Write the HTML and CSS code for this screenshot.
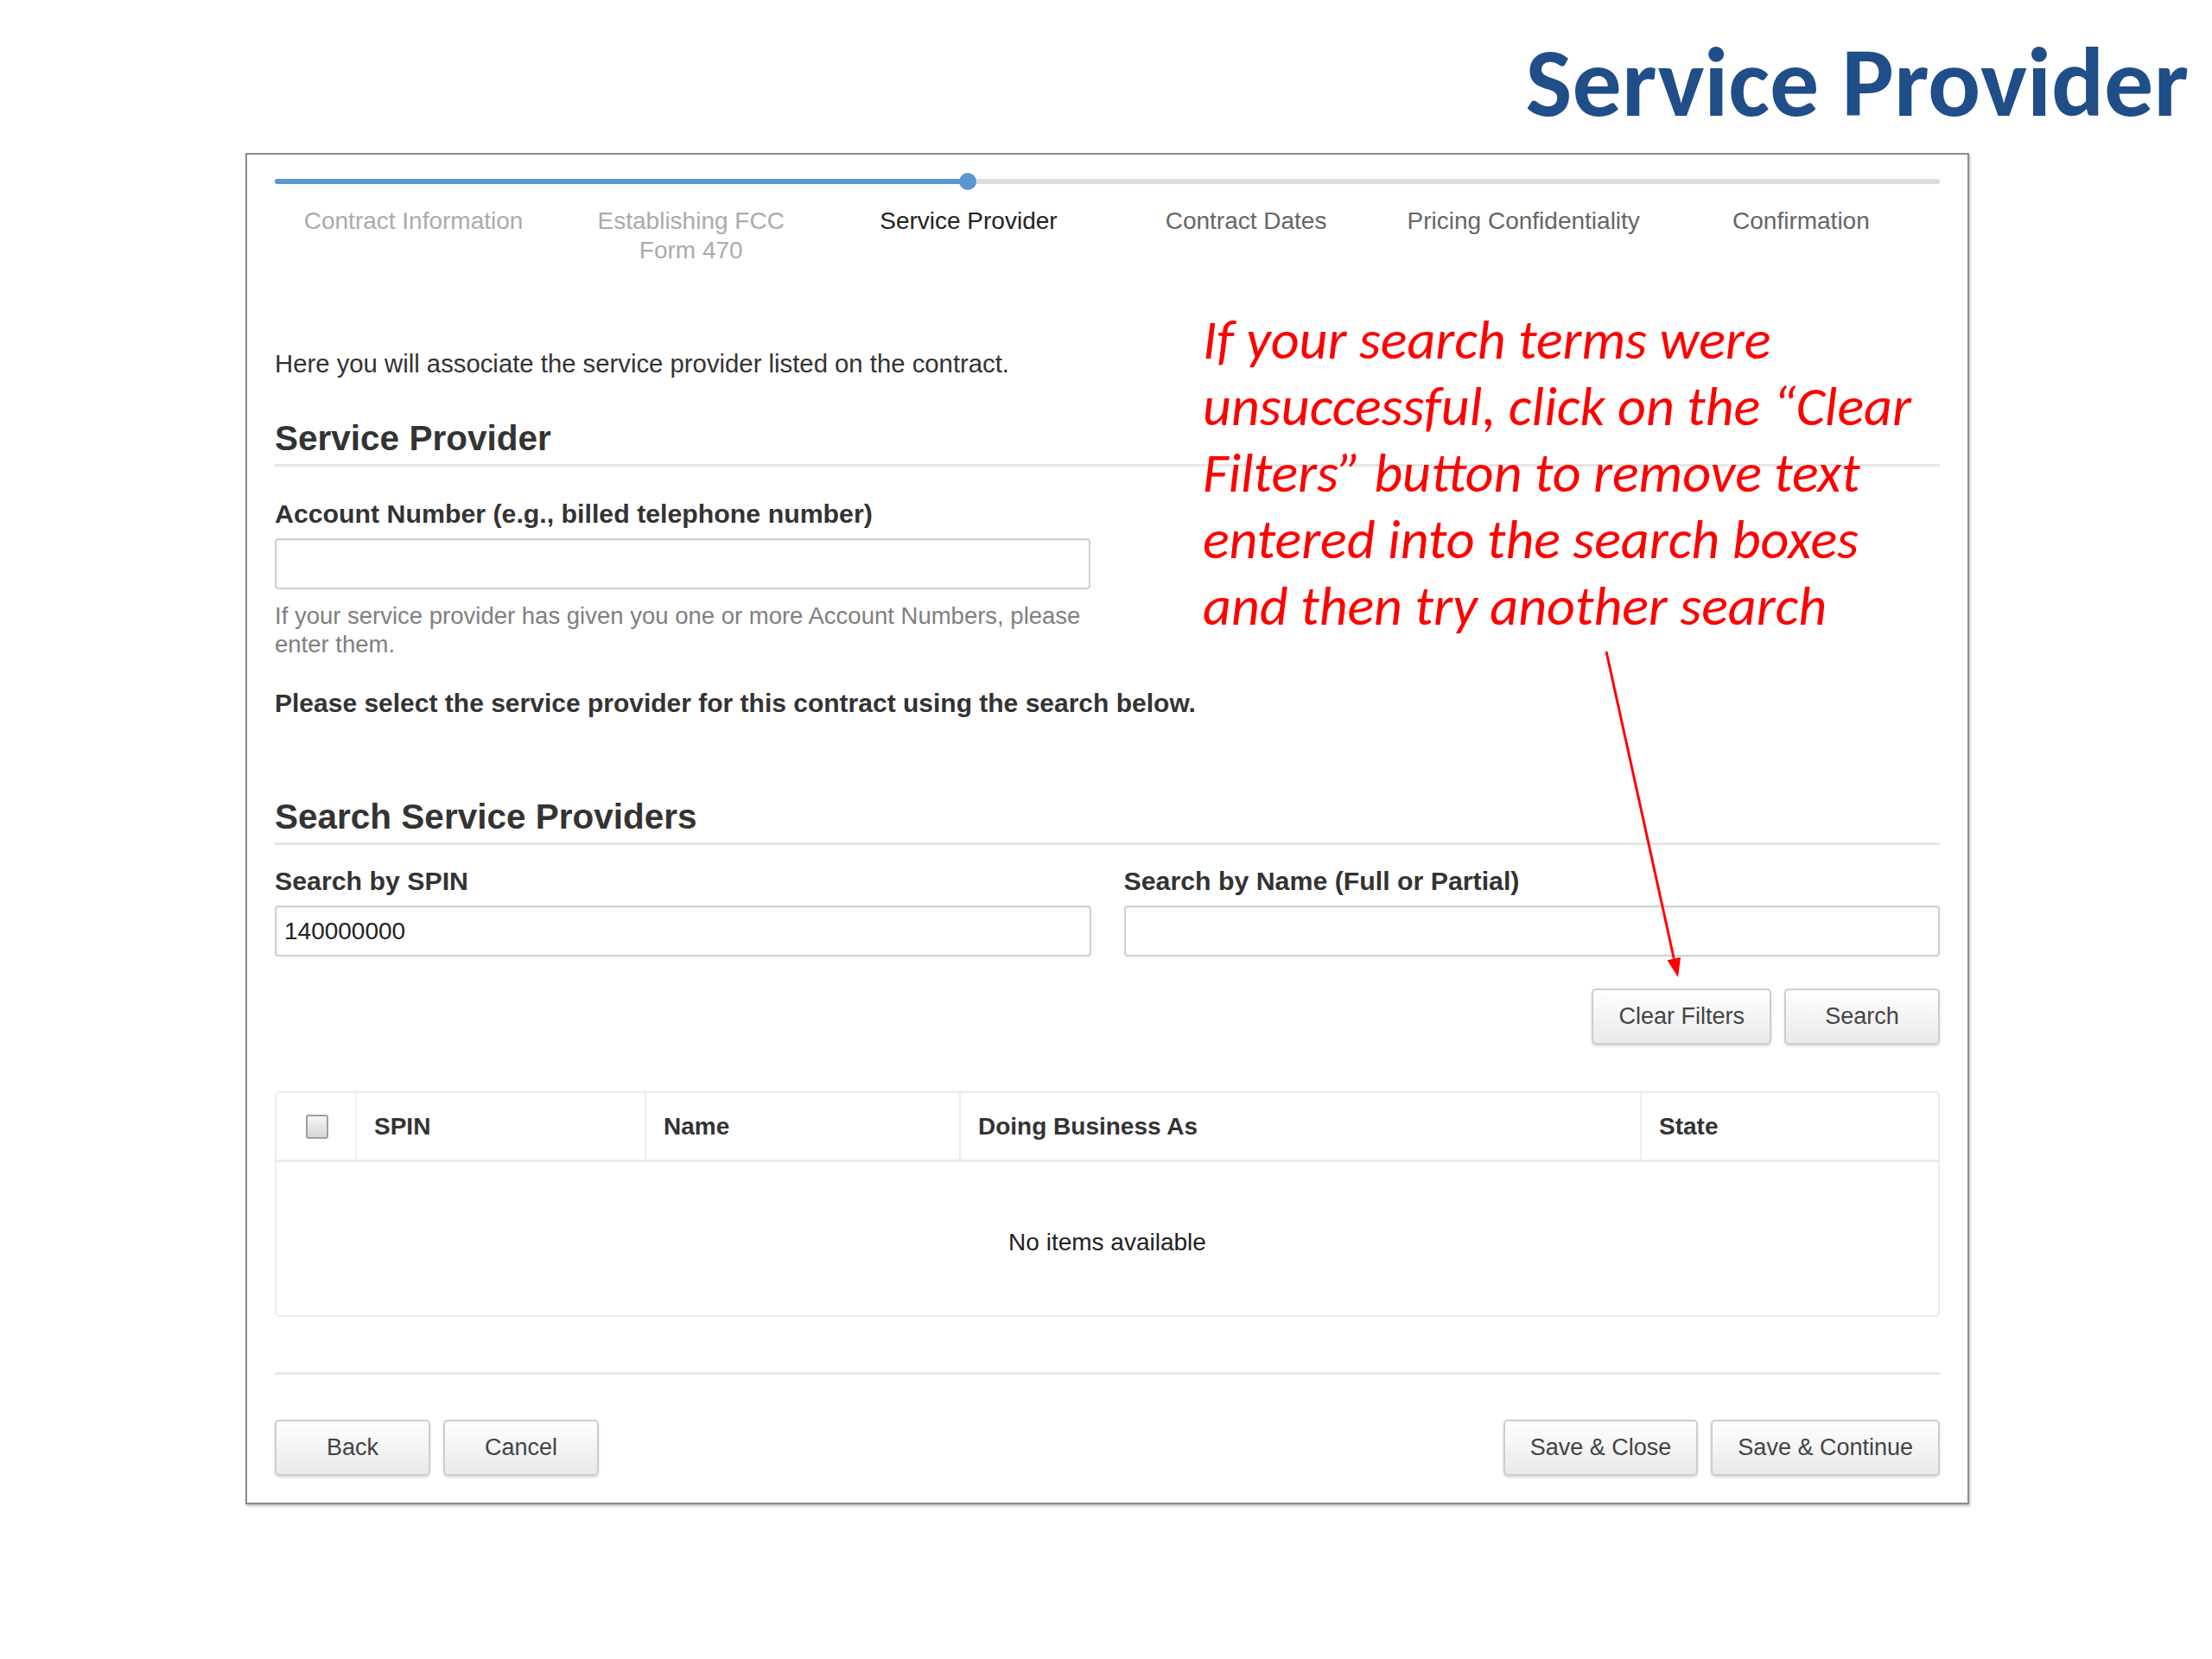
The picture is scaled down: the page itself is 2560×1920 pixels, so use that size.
FILE: index.html
```html
<!DOCTYPE html>
<html>
<head>
    <title>Service Provider</title>
    <link rel="stylesheet" href="styles.css">
</head>
<body>
    <h1 class="slide-title">Service Provider</h1>

    <div class="panel">
        <div class="progress">
            <div class="progress-fill" style="width: 41.64%"></div>
            <span class="progress-dot" style="left: 41.64%"></span>
        </div>
        <ul class="steps">
            <li class="done">Contract Information</li>
            <li class="done">Establishing FCC<br>Form 470</li>
            <li class="current">Service Provider</li>
            <li>Contract Dates</li>
            <li>Pricing Confidentiality</li>
            <li>Confirmation</li>
        </ul>

        <p class="intro">Here you will associate the service provider listed on the contract.</p>

        <h2 class="section-title">Service Provider</h2>
        <div class="field account-field">
            <label>Account Number (e.g., billed telephone number)</label>
            <input type="text" class="text-input">
            <p class="help">If your service provider has given you one or more Account Numbers, please enter them.</p>
        </div>
        <p class="instruction">Please select the service provider for this contract using the search below.</p>

        <h2 class="section-title search-title">Search Service Providers</h2>
        <div class="search-row">
            <div class="field">
                <label>Search by SPIN</label>
                <input type="text" class="text-input" value="140000000">
            </div>
            <div class="field">
                <label>Search by Name (Full or Partial)</label>
                <input type="text" class="text-input">
            </div>
        </div>
        <div class="search-actions">
            <button class="btn">Clear Filters</button>
            <button class="btn">Search</button>
        </div>

        <div class="grid">
            <div class="grid-head">
                <div class="cell cell-check"><span class="checkbox"></span></div>
                <div class="cell">SPIN</div>
                <div class="cell">Name</div>
                <div class="cell">Doing Business As</div>
                <div class="cell">State</div>
            </div>
            <div class="grid-empty">No items available</div>
        </div>

        <div class="footer">
            <div class="footer-group">
                <button class="btn">Back</button>
                <button class="btn">Cancel</button>
            </div>
            <div class="footer-group">
                <button class="btn">Save &amp; Close</button>
                <button class="btn">Save &amp; Continue</button>
            </div>
        </div>

        <!-- note laid over the form -->
        <div class="callout">
            If your search terms were<br>
            unsuccessful, click on the “Clear<br>
            Filters” button to remove text<br>
            entered into the search boxes<br>
            and then try another search
        </div>
        <svg class="callout-arrow" width="120" height="400" viewBox="0 0 120 400">
            <line x1="20" y1="14" x2="98.3" y2="369.5" stroke="#f00" stroke-width="3"/>
            <polygon points="103,391 90.5,371.2 106.1,367.8" fill="#f00"/>
        </svg>
    </div>
</body>
</html>
```

FILE: styles.css
```css
* {
    margin: 0;
    padding: 0;
    box-sizing: border-box;
}

body {
    font-family: "Liberation Sans", Arial, sans-serif;
    background: #fff;
    color: #333;
    width: 2560px;
    min-height: 1920px;
}

.slide-title {
    font-family: Carlito, Lato, sans-serif;
    font-weight: 700;
    font-size: 114px;
    line-height: 137px;
    color: #1f4e89;
    text-align: right;
    padding: 27px 27px 0 0;
}

.panel {
    position: relative;
    width: 1995px;
    margin: 13px 0 0 284px;
    border: 2px solid #8c8c8c;
    box-shadow: 1px 2px 3px rgba(0, 0, 0, 0.25);
    padding: 28px 32px 31px 32px;
}

.progress {
    position: relative;
    height: 6px;
    background: #dcdcdc;
    border-radius: 3px;
}

.progress-fill {
    height: 100%;
    background: #5b97d3;
    border-radius: 3px;
}

.progress-dot {
    position: absolute;
    top: 50%;
    width: 20px;
    height: 20px;
    margin: -10px 0 0 -10px;
    border-radius: 50%;
    background: #5b97d3;
}

.steps {
    list-style: none;
    display: grid;
    grid-template-columns: repeat(6, 1fr);
    margin-top: 26px;
    font-size: 28px;
    line-height: 34px;
    text-align: center;
    color: #666;
}

.steps .done {
    color: #ababab;
}

.steps .current {
    color: #222;
}

.intro {
    margin-top: 97px;
    font-size: 29.3px;
    line-height: 34px;
    color: #333;
}

.section-title {
    margin-top: 47px;
    font-size: 40.5px;
    line-height: 44px;
    font-weight: 700;
    color: #333;
    padding-bottom: 8px;
    border-bottom: 3px solid #e6e6e6;
}

.field label {
    display: block;
    font-size: 30.3px;
    line-height: 34px;
    font-weight: 700;
    color: #333;
}

.account-field {
    width: 944px;
    margin-top: 38px;
}

.text-input {
    display: block;
    width: 100%;
    height: 59px;
    margin-top: 11px;
    border: 2px solid #cfcfcf;
    border-radius: 4px;
    box-shadow: inset 0 1px 2px rgba(0, 0, 0, 0.08);
    padding: 0 9px;
    font: 28px "Liberation Sans", Arial, sans-serif;
    color: #222;
}

.help {
    margin-top: 14px;
    font-size: 27.5px;
    line-height: 33px;
    color: #808080;
}

.instruction {
    margin-top: 35px;
    font-size: 30px;
    line-height: 34px;
    font-weight: 700;
    color: #333;
}

.search-title {
    margin-top: 92px;
}

.search-row {
    display: grid;
    grid-template-columns: 1fr 1fr;
    gap: 38px;
    margin-top: 25px;
}

.search-actions {
    display: flex;
    justify-content: flex-end;
    gap: 15px;
    margin-top: 37px;
}

.btn {
    height: 65px;
    min-width: 180px;
    padding: 0 29px;
    font: 27px "Liberation Sans", Arial, sans-serif;
    color: #444;
    background: linear-gradient(#fff, #e9e9e9);
    border: 2px solid #cdcdcd;
    border-radius: 5px;
    box-shadow: 0 2px 3px rgba(0, 0, 0, 0.15);
}

.grid {
    margin-top: 54px;
    border: 2px solid #ececec;
    border-radius: 5px;
}

.grid-head {
    display: grid;
    grid-template-columns: 91px 335px 364px 788px 1fr;
    height: 80px;
    border-bottom: 3px solid #ececec;
}

.cell {
    display: flex;
    align-items: center;
    padding-left: 20px;
    font-size: 28px;
    font-weight: 700;
    color: #333;
    border-left: 2px solid #efefef;
}

.cell-check {
    border-left: none;
    padding-left: 34px;
}

.checkbox {
    width: 26px;
    height: 28px;
    border: 2px solid #a0a0a0;
    border-radius: 3px;
    background: linear-gradient(#f6f6f6, #d6d6d6);
}

.grid-empty {
    height: 177px;
    padding-top: 8px;
    display: flex;
    align-items: center;
    justify-content: center;
    font-size: 28px;
    color: #222;
}

.footer {
    display: flex;
    justify-content: space-between;
    margin-top: 64px;
    padding-top: 52px;
    border-top: 3px solid #e8e8e8;
}

.footer-group {
    display: flex;
    gap: 15px;
}

.callout {
    position: absolute;
    left: 1106px;
    top: 176px;
    font-family: Carlito, Lato, sans-serif;
    font-style: italic;
    font-size: 64px;
    line-height: 77px;
    color: #f00;
    white-space: nowrap;
}

.callout-arrow {
    position: absolute;
    left: 1553px;
    top: 561px;
}
```
